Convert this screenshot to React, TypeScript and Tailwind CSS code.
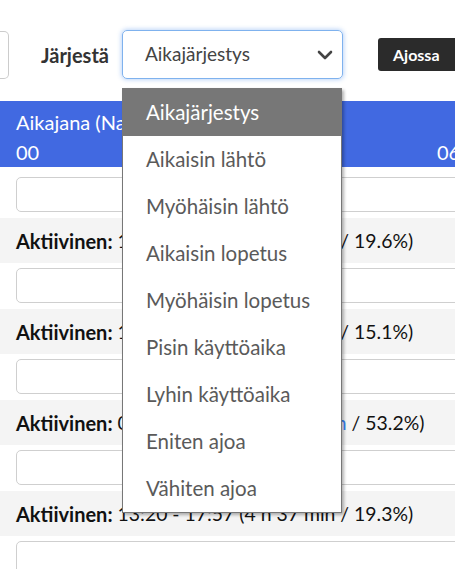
import React from 'react';

const options = [
  'Aikajärjestys',
  'Aikaisin lähtö',
  'Myöhäisin lähtö',
  'Aikaisin lopetus',
  'Myöhäisin lopetus',
  'Pisin käyttöaika',
  'Lyhin käyttöaika',
  'Eniten ajoa',
  'Vähiten ajoa',
];

const rows = [
  { time: '10:08 - 14:50 (4 h 42 min', pct: '19.6%)' },
  { time: '15:02 - 18:39 (3 h 37 min', pct: '15.1%)' },
  { time: '06:10 - 18:56 (12 h 46 ', blue: 'min', pct: '53.2%)' },
  { time: '13:20 - 17:57 (4 h 37 min', pct: '19.3%)' },
];

function Chevron() {
  return (
    <svg width="16" height="10" viewBox="0 0 16 10" className="shrink-0">
      <polyline points="2,2 8,8 14,2" fill="none" stroke="#444" strokeWidth="2.6" strokeLinecap="round" strokeLinejoin="round" />
    </svg>
  );
}

export default function App() {
  return (
    <div className="relative w-[455px] h-[569px] overflow-hidden bg-white font-['Lato',sans-serif] text-[20px]">
      {/* toolbar */}
      <div className="flex items-center h-[101px] pt-[30px] pb-[22px] whitespace-nowrap">
        <div className="w-[9px] h-[48px] border border-[#ccc] rounded-r-[5px] border-l-0 shrink-0" />
        <span className="ml-[32px] font-bold text-[#333] leading-none">Järjestä</span>
        <div className="ml-[13px] w-[221px] h-[49px] shrink-0 flex items-center justify-between pl-[22px] pr-[9px] border border-[#7fb2ee] rounded-[5px] shadow-[0_0_4px_1px_rgba(110,165,240,0.45)] text-[19px] text-[#444]">
          <span>Aikajärjestys</span>
          <Chevron />
        </div>
        <div className="ml-[35px] w-[82px] h-[33px] shrink-0 flex items-center pl-[15px] bg-[#2b2b2b] rounded-[3px] text-white text-[16px] font-bold">
          Ajossa
        </div>
      </div>

      {/* timeline header */}
      <div className="h-[66px] bg-[#4169e1] text-white pl-[16px] pt-[6px] leading-[30px] whitespace-nowrap">
        <div>Aikajana (Nakymä)</div>
        <div className="flex">
          <span className="w-[421px] shrink-0">00</span>
          <span className="w-[421px] shrink-0">06</span>
        </div>
      </div>

      {/* rows */}
      <div className="flex flex-col pt-[10px]">
        {rows.map((r, i) => (
          <div key={i} className="flex flex-col">
            <div className="ml-[16px] w-[600px] h-[35px] border-[1.5px] border-[#cfcfcf] rounded-[5px]" />
            <div className="mt-[6px] mb-[5px] h-[45px] bg-[#f4f4f4] flex items-center pl-[16px] text-[#111] whitespace-nowrap">
              <span className="font-bold">Aktiivinen:</span>
              <span className="ml-[5px] text-[19.4px]">
                {r.time}
                {r.blue && <span className="text-[#3b82f6]">{r.blue}</span>} / {r.pct}
              </span>
            </div>
          </div>
        ))}
        <div className="ml-[16px] w-[600px] h-[35px] border-[1.5px] border-[#cfcfcf] rounded-[5px]" />
      </div>

      {/* open dropdown menu */}
      <div className="absolute left-[122px] top-[88px] w-[220px] border border-[#777] bg-white shadow-[2px_2px_3px_rgba(0,0,0,0.3)] text-[20.5px]">
        {options.map((o, i) => (
          <div
            key={o}
            className={
              i === 0
                ? 'h-[47px] flex items-center pl-[23px] bg-[#777] text-white'
                : 'h-[47px] flex items-center pl-[23px] text-[#5a5a5a]'
            }
          >
            {o}
          </div>
        ))}
      </div>
    </div>
  );
}
